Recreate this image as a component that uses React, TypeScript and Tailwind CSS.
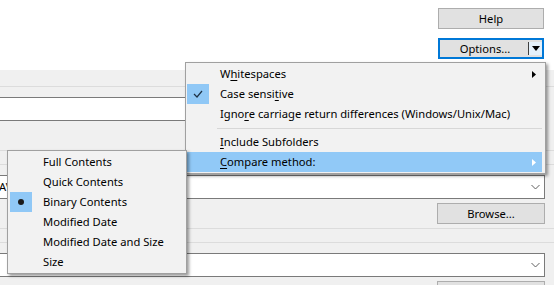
import React from "react";

function Chevron() {
  return (
    <svg width="9" height="6" viewBox="0 0 9 6" className="shrink-0">
      <polyline points="0.5,1 4.5,5 8.5,1" fill="none" stroke="#606060" strokeWidth="1" />
    </svg>
  );
}

function Input({ text }: { text?: string }) {
  return (
    <div className="h-[24px] -ml-[6px] bg-white border border-[#7a7a7a] flex items-center justify-between pr-[4px]">
      <span className="pl-[4px] leading-none">{text ?? ""}</span>
      <Chevron />
    </div>
  );
}

function WinButton({ label }: { label?: string }) {
  return (
    <div className="w-[108px] h-[21px] bg-[#e1e1e1] border border-[#adadad] flex items-center justify-center leading-none">
      {label}
    </div>
  );
}

function Group({ text, label }: { text?: string; label?: string }) {
  return (
    <div className="h-[65px] border-t border-b border-[#dcdcdc] pt-[10px] pr-[9px] flex flex-col">
      <Input text={text} />
      <div className="flex justify-end mt-[4px]">
        <WinButton label={label} />
      </div>
    </div>
  );
}

function RightArrow({ white }: { white?: boolean }) {
  return (
    <svg width="4" height="7" viewBox="0 0 4 7" className="absolute right-[6px] top-[7px]">
      <polygon points="0,0 4,3.5 0,7" fill={white ? "#ffffff" : "#000000"} />
    </svg>
  );
}

function MenuItem({
  children,
  arrow,
  highlight,
  check,
  bullet,
}: {
  children: React.ReactNode;
  arrow?: boolean;
  highlight?: boolean;
  check?: boolean;
  bullet?: boolean;
}) {
  return (
    <div className={"relative h-[20px] flex items-center pl-[33px] whitespace-nowrap " + (highlight ? "bg-[#91c9f7]" : "")}>
      {check && (
        <div className="absolute left-0 top-0 w-[22px] h-[20px] bg-[#90c8f6] flex items-center justify-center">
          <svg width="10" height="8" viewBox="0 0 10 8">
            <polyline points="1,4 4,7 9,1" fill="none" stroke="#1e3246" strokeWidth="1.2" />
          </svg>
        </div>
      )}
      {bullet && (
        <div className="absolute left-0 top-0 w-[22px] h-[20px] bg-[#90c8f6] flex items-center justify-center">
          <div className="w-[6px] h-[6px] rounded-full bg-[#1a1a1a]" />
        </div>
      )}
      <span className="leading-none">{children}</span>
      {arrow && <RightArrow white={highlight} />}
    </div>
  );
}

function U({ children }: { children: React.ReactNode }) {
  return <span className="underline underline-offset-[2px] decoration-1">{children}</span>;
}

export default function App() {
  return (
    <div className="relative w-[554px] h-[285px] overflow-hidden bg-[#f0f0f0] text-[11.2px] text-black font-['Noto_Sans','Segoe_UI',sans-serif]">
      <div className="h-[70px] bg-white flex flex-col items-end pt-[8px] pr-[10px] gap-[9px]">
        <div className="w-[106px] h-[21px] bg-[#e1e1e1] border border-[#adadad] flex items-center justify-center leading-none">
          Help
        </div>
        <div className="w-[106px] h-[21px] bg-[#e1e1e1] border-2 border-[#0078d7] flex items-stretch leading-none">
          <div className="flex-1 flex items-center justify-center pl-[2px]">Options...</div>
          <div className="w-[14px] flex items-center justify-center border-l border-[#404040] my-[2px] bg-[#e5f1fb]">
            <svg width="8" height="5" viewBox="0 0 8 5">
              <polygon points="0,0 8,0 4,5" fill="#000" />
            </svg>
          </div>
        </div>
      </div>

      <div className="pt-[16px] flex flex-col gap-[13px]">
        <Group label="Browse..." />
        <Group text="AV" label="Browse..." />
        <Group />
      </div>

      {/* Options menu */}
      <div className="absolute left-[185px] top-[62px] w-[361px] bg-[#f2f2f2] border border-[#a0a0a0] py-[1px] pl-[1px] pr-[3px] shadow-[2px_2px_3px_rgba(0,0,0,0.4)]">
        <MenuItem arrow>
          W<U>h</U>itespaces
        </MenuItem>
        <MenuItem check>
          Case sensi<U>t</U>ive
        </MenuItem>
        <MenuItem>
          Igno<U>r</U>e carriage return differences (Windows/Unix/Mac)
        </MenuItem>
        <div className="h-[8px] flex items-center">
          <div className="ml-[30px] flex-1 h-px bg-[#d7d7d7]" />
        </div>
        <MenuItem>
          <U>I</U>nclude Subfolders
        </MenuItem>
        <MenuItem arrow highlight>
          <U>C</U>ompare method:
        </MenuItem>
      </div>

      {/* Compare method submenu */}
      <div className="absolute left-[7px] top-[150px] w-[180px] bg-[#f2f2f2] border border-[#a0a0a0] py-[1px] pl-[2px] pr-[2px] shadow-[2px_2px_3px_rgba(0,0,0,0.4)]">
        <MenuItem>Full Contents</MenuItem>
        <MenuItem>Quick Contents</MenuItem>
        <MenuItem bullet>Binary Contents</MenuItem>
        <MenuItem>Modified Date</MenuItem>
        <MenuItem>Modified Date and Size</MenuItem>
        <MenuItem>Size</MenuItem>
      </div>
    </div>
  );
}
